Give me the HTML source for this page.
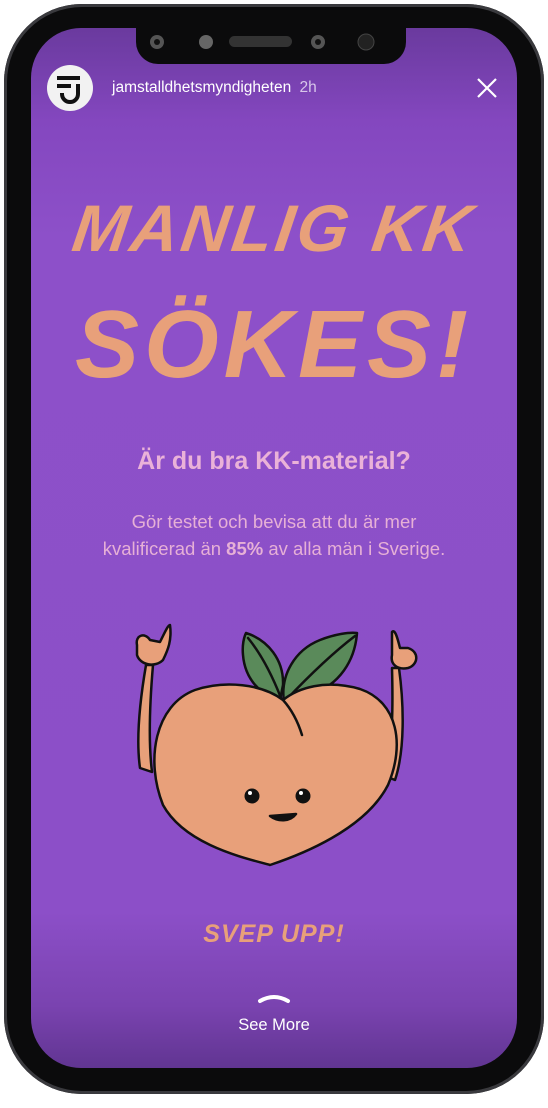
<!DOCTYPE html>
<html><head><meta charset="utf-8"><style>
html,body{margin:0;padding:0;background:#fff;width:548px;height:1108px;overflow:hidden;font-family:"Liberation Sans",sans-serif}
.phone{position:absolute;left:4px;top:4px;width:540px;height:1090px;border-radius:78px;background:#0b0b0c;box-shadow:inset 0 0 0 3px #3a3a3e}
.screen{position:absolute;left:31px;top:28px;width:486px;height:1040px;border-radius:50px;overflow:hidden;background:linear-gradient(180deg,#6a3a9e 0%,#8447bf 9%,#8d50c9 20%,#8c4fc8 85%,#7a43b0 94%,#613592 100%)}
.notch{position:absolute;left:136px;top:28px;width:270px;height:36px;background:#0b0b0c;border-radius:0 0 22px 22px}
.t{position:absolute;left:0;width:486px;text-align:center}
</style></head><body>
<div class="phone"></div>
<div class="screen">
 <div style="position:absolute;left:16px;top:37px;width:46px;height:46px;border-radius:50%;background:#f2f2f2"></div>
 <svg style="position:absolute;left:16px;top:37px" width="46" height="46" viewBox="0 0 46 46"><g stroke="#111" stroke-width="4" fill="none" stroke-linecap="butt"><path d="M10 13h23M10 21h14"/><path d="M31 19v10a8 8 0 0 1-16 0v-1"/></g></svg>
 <div style="position:absolute;left:81px;top:51px;font-size:15.5px;color:#fff">jamstalldhetsmyndigheten <span style="color:#d8c6ea;margin-left:4px">2h</span></div>
 <svg style="position:absolute;left:445px;top:49px" width="22" height="22" viewBox="0 0 22 22"><path d="M2 2L20 20M20 2L2 20" stroke="#fff" stroke-width="2.2"/></svg>
 <div class="t" style="top:162px;font-size:66px;font-weight:bold;font-style:italic;color:#e8a07a;letter-spacing:3px;transform:skewX(-8deg)">MANLIG KK</div>
 <div class="t" style="top:262px;font-size:96px;font-weight:bold;font-style:italic;color:#e8a07a;letter-spacing:5px">SÖKES!</div>
 <div class="t" style="top:419px;font-size:25px;font-weight:bold;color:#eab2d8">Är du bra KK-material?</div>
 <div class="t" style="top:480px;font-size:18.5px;line-height:27px;color:#e6b0d6">Gör testet och bevisa att du är mer<br>kvalificerad än <b>85%</b> av alla män i Sverige.</div>
 <svg style="position:absolute;left:-31px;top:-28px" width="548" height="1108" viewBox="0 0 548 1108">
  <g stroke="#111" stroke-width="2.5" stroke-linejoin="round" stroke-linecap="round">
   <path d="M146 665 C140 700 136 740 140 768 L152 772 C148 740 150 700 153 665 Z" fill="#e8a07a"/>
   <path d="M137 645 C135 635 145 632 150 640 L160 642 C165 632 168 625 170 625 C172 640 168 650 163 660 C155 668 140 665 137 655 Z" fill="#e8a07a"/>
   <path d="M399 668 C404 705 405 750 395 780 L385 776 C393 745 393 705 392 668 Z" fill="#e8a07a"/>
   <path d="M392 632 C395 628 398 640 400 648 L408 648 C420 652 418 665 408 668 C398 670 390 665 392 655 Z" fill="#e8a07a"/>
   <path d="M280 700 C262 696 245 680 243 655 C242 645 244 637 246 633 C268 640 284 660 283 685 Z" fill="#5a8a5a"/>
   <path d="M284 702 C280 675 295 650 320 640 C335 634 350 632 357 633 C355 660 340 685 310 695 Z" fill="#5a8a5a"/>
   <path d="M281 698 C272 675 262 655 248 638" fill="none"/>
   <path d="M286 700 C305 680 330 655 355 636" fill="none"/>
   <path d="M283 700 C262 684 225 680 195 690 C155 705 145 760 163 805 C185 845 245 858 270 865 C300 855 365 830 388 785 C405 745 398 702 360 689 C325 679 298 688 283 700 Z" fill="#e8a07a"/>
   <path d="M283 700 C292 710 298 722 302 735" fill="none"/>
   <path d="M270 816 C278 822 290 822 296 814 Z" fill="#111"/>
  </g>
  <circle cx="252" cy="796" r="7.5" fill="#111"/><circle cx="303" cy="796" r="7.5" fill="#111"/>
  <circle cx="250" cy="793" r="2" fill="#fff"/><circle cx="301" cy="793" r="2" fill="#fff"/>
 </svg>
 <div class="t" style="top:892px;font-size:25px;font-weight:bold;font-style:italic;color:#e8a07a;letter-spacing:1px">SVEP UPP!</div>
 <svg style="position:absolute;left:226px;top:964px" width="34" height="12" viewBox="0 0 34 12"><path d="M3 9 Q17 1 31 9" stroke="#fff" stroke-width="4" fill="none" stroke-linecap="round"/></svg>
 <div class="t" style="top:988px;font-size:16.5px;color:#fff">See More</div>
</div>
<div class="notch"></div>
<svg style="position:absolute;left:0;top:0" width="548" height="80"><circle cx="157" cy="42" r="7" fill="#555"/><circle cx="157" cy="42" r="3" fill="#111"/><circle cx="206" cy="42" r="7" fill="#666"/><rect x="229" y="36" width="63" height="11" rx="5.5" fill="#333"/><circle cx="318" cy="42" r="7" fill="#555"/><circle cx="318" cy="42" r="3" fill="#111"/><circle cx="366" cy="42" r="8" fill="#222" stroke="#444"/></svg>
</body></html>
